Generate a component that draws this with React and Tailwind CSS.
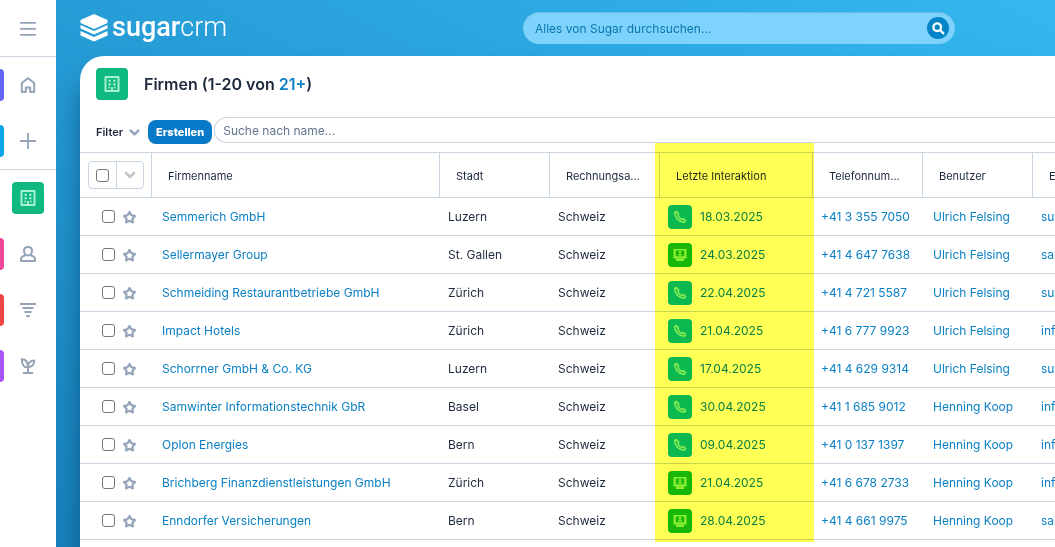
import { ChevronDown, Star } from "lucide-react";

const FIRMS = [
  { name: "Semmerich GmbH", city: "Luzern", country: "Schweiz", type: "call", date: "18.03.2025", phone: "+41 3 355 7050", user: "Ulrich Felsing", mail: "support@semmerich.ch" },
  { name: "Sellermayer Group", city: "St. Gallen", country: "Schweiz", type: "meeting", date: "24.03.2025", phone: "+41 4 647 7638", user: "Ulrich Felsing", mail: "sales@sellermayer.ch" },
  { name: "Schmeiding Restaurantbetriebe GmbH", city: "Zürich", country: "Schweiz", type: "call", date: "22.04.2025", phone: "+41 4 721 5587", user: "Ulrich Felsing", mail: "support@schmeiding.ch" },
  { name: "Impact Hotels", city: "Zürich", country: "Schweiz", type: "call", date: "21.04.2025", phone: "+41 6 777 9923", user: "Ulrich Felsing", mail: "info@impact.ch" },
  { name: "Schorrner GmbH & Co. KG", city: "Luzern", country: "Schweiz", type: "call", date: "17.04.2025", phone: "+41 4 629 9314", user: "Ulrich Felsing", mail: "support@schorrner.ch" },
  { name: "Samwinter Informationstechnik GbR", city: "Basel", country: "Schweiz", type: "call", date: "30.04.2025", phone: "+41 1 685 9012", user: "Henning Koop", mail: "info@samwinter.ch" },
  { name: "Oplon Energies", city: "Bern", country: "Schweiz", type: "call", date: "09.04.2025", phone: "+41 0 137 1397", user: "Henning Koop", mail: "info@oplon.ch" },
  { name: "Brichberg Finanzdienstleistungen GmbH", city: "Zürich", country: "Schweiz", type: "meeting", date: "21.04.2025", phone: "+41 6 678 2733", user: "Henning Koop", mail: "info@brichberg.ch" },
  { name: "Enndorfer Versicherungen", city: "Bern", country: "Schweiz", type: "meeting", date: "28.04.2025", phone: "+41 4 661 9975", user: "Henning Koop", mail: "sales@enndorfer.ch" },
];

const COLUMNS = ["Firmenname", "Stadt", "Rechnungsa...", "Letzte Interaktion", "Telefonnum...", "Benutzer", "E-Mail"];

function MenuIcon() {
  return (
    <svg viewBox="0 0 16 16" className="h-4 w-4" stroke="currentColor" strokeWidth="1.800" aria-hidden="true">
      <path d="M0 2.800h16M0 8.800h16M0 14.800h16" />
    </svg>
  );
}

function PlusIcon() {
  return (
    <svg viewBox="0 0 16 16" className="h-4 w-4" stroke="currentColor" strokeWidth="1.800" aria-hidden="true">
      <path d="M0 8h16M8 0v16" />
    </svg>
  );
}

function BuildingIcon() {
  return (
    <svg viewBox="0 0 16 16" className="h-4 w-4" fill="none" aria-hidden="true">
      <path d="M1.500 1h13v14h-13z" stroke="currentColor" strokeWidth="2" strokeLinejoin="round" />
      <path d="M4.500 3.800h2.400v2H4.500zM9.100 3.800h2.400v2H9.100zM4.500 7.300h2.400v2H4.500zM9.100 7.300h2.400v2H9.100zM4.500 10.600H6v1.800H4.500zM10 10.600h1.500v1.800H10zM7 11h2v4H7z" fill="currentColor" />
    </svg>
  );
}

function HomeIcon() {
  return (
    <svg viewBox="0 0 16 16" className="h-4 w-4" fill="none" stroke="currentColor" strokeWidth="2" strokeLinejoin="round" aria-hidden="true">
      <path d="M1.800 6 8 1.200 14.200 6v9h-4v-4.500H5.800V15h-4z" />
    </svg>
  );
}

function PersonIcon() {
  return (
    <svg viewBox="0 0 16 16" className="h-4 w-4" fill="none" stroke="currentColor" strokeWidth="2" strokeLinejoin="round" aria-hidden="true">
      <path d="M8 1c2.400 0 4 1.600 4 4s-1.600 4.400-4 4.400S4 7.400 4 5s1.600-4 4-4z" />
      <path d="M5.500 9 2.400 10.600C1.400 11 1 11.800 1 12.800V15h14v-2.200c0-1-.4-1.800-1.400-2.200L10.500 9" />
    </svg>
  );
}

function FunnelIcon() {
  return (
    <svg viewBox="0 0 16 16" className="h-4 w-4" stroke="currentColor" strokeWidth="2" aria-hidden="true">
      <path d="M0 2h16M2.500 6h11M4.500 10h7M6.200 14h3.600" />
    </svg>
  );
}

function PlantIcon() {
  return (
    <svg viewBox="0 0 16 16" className="h-4 w-4" fill="none" stroke="currentColor" strokeWidth="2" aria-hidden="true">
      <path d="M8 15V8M3 15h10M8 9.500C4 9.500 1.800 7 1.800 1.300 5.500 1.300 8 4 8 9.500zM8 9C8 5 10.500 2.500 14.200 2.500 14.200 7 12 9 8 9z" />
    </svg>
  );
}

function PhoneIcon() {
  return (
    <svg viewBox="0 0 14 14" className="h-3.5 w-3.5" fill="none" stroke="currentColor" strokeWidth="1.600" strokeLinejoin="round" aria-hidden="true">
      <path d="M3.500 1.500 1.700 2.600C1.700 7.700 6 12 11.200 12.200l1.300-1.800-2.500-1.800-1.400 1C7 8.800 5.600 7.300 4.900 5.500l.8-1.300z" />
    </svg>
  );
}

function MeetingIcon() {
  return (
    <svg viewBox="0 0 14 14" className="h-3.5 w-3.5" fill="currentColor" fillRule="evenodd" aria-hidden="true">
      <path d="M.5 1h13v9.500h-13zM2.800 2.600v5.600h8.400V2.600z" />
      <circle cx="7" cy="4.200" r="1.200" />
      <path d="M4.800 7.600c0-1.400 1-1.800 2.200-1.800s2.200.4 2.200 1.800zM3 10.500h8V13H3z" />
    </svg>
  );
}

const NAV = [
  { label: "Home", bar: "bg-[#6366f1]", icon: <HomeIcon /> },
  { label: "Neu", bar: "bg-[#0ea5e9]", icon: <PlusIcon /> },
  { label: "Firmen", active: true, icon: <BuildingIcon /> },
  { label: "Kontakte", bar: "bg-[#ec4899]", icon: <PersonIcon /> },
  { label: "Filter", bar: "bg-[#ef4444]", icon: <FunnelIcon /> },
  { label: "Interessenten", bar: "bg-[#a855f7]", icon: <PlantIcon /> },
];

function Sidebar() {
  return (
    <nav className="w-14 shrink-0 bg-white text-[#94a3b8]">
      <button aria-label="Menü" className="flex h-14 w-full items-center justify-center">
        <MenuIcon />
      </button>
      {NAV.map((item) => (
        <div
          key={item.label}
          className={`box-content flex h-14 items-center ${item.label === "Home" || item.active ? "border-t border-slate-300" : ""}`}
        >
          <span className={`h-8 w-1 rounded-r ${item.bar || ""}`} />
          <a
            href="#"
            aria-label={item.label}
            className={`ml-2 flex h-8 w-8 items-center justify-center rounded ${item.active ? "bg-[#10b981] text-[#a7f3d0]" : ""}`}
          >
            {item.icon}
          </a>
        </div>
      ))}
    </nav>
  );
}

function Header() {
  return (
    <header className="flex h-14 items-center">
      <a href="#" className="ml-6 flex w-[443px] items-center gap-1 text-white">
        <svg viewBox="0 0 28 28" className="h-7 w-7" fill="currentColor" aria-hidden="true">
          <path d="M14 0 27.500 6v3L14 15 .5 9V6z" />
          <path d="M.5 11 14 17l13.500-6v3.500L14 20.500.5 14.500z" />
          <path d="M.5 17 14 23l13.500-6v4.500L14 27.500.5 21.500z" />
        </svg>
        <span className="pb-0.5 font-[Roboto] text-[27px] leading-8">
          <span className="font-medium">sugar</span>
          <span className="font-light">crm</span>
        </span>
      </a>
      <form className="flex h-8 w-[432px] items-center rounded-full bg-[#7dd3fc] pr-1.5 pl-3 shadow-[inset_0_1px_1px_rgba(0,60,110,0.15)]">
        <input
          aria-label="Alles von Sugar durchsuchen"
          placeholder="Alles von Sugar durchsuchen..."
          className="h-8 min-w-0 flex-1 bg-transparent pt-px text-xs outline-none placeholder:text-[#0b76ae]"
        />
        <button type="button" aria-label="Suchen" className="flex h-[22px] w-[22px] items-center justify-center rounded-full bg-[#0284c7] text-white">
          <svg viewBox="0 0 14 14" className="h-3.5 w-3.5" fill="none" stroke="currentColor" strokeWidth="2.400" aria-hidden="true">
            <circle cx="6.200" cy="6.200" r="3.800" />
            <path d="m9 9 4 4" />
          </svg>
        </button>
      </form>
    </header>
  );
}

function CheckBox({ label }) {
  return (
    <input
      type="checkbox"
      aria-label={label}
      className="block h-[13px] w-[13px] appearance-none rounded-[3px] border border-[#767676] bg-white checked:bg-sky-600"
    />
  );
}

function FirmTable() {
  return (
    <table className="w-max table-fixed border-separate border-spacing-0 text-left">
      <colgroup>
        <col className="w-[72px]" />
        <col className="w-[288px]" />
        <col className="w-[110px]" />
        <col className="w-[110px]" />
        <col className="w-[153px]" />
        <col className="w-[110px]" />
        <col className="w-[110px]" />
        <col className="w-[110px]" />
      </colgroup>
      <thead>
        <tr className="h-[46px]">
          <th className="border-y border-r border-slate-300 p-0 pl-2">
            <div className="flex h-7 w-14 rounded border border-slate-300">
              <span className="flex w-7 items-center justify-center border-r border-slate-300">
                <CheckBox label="Alle auswählen" />
              </span>
              <button aria-label="Auswahl" className="flex flex-1 items-center justify-center text-[#c3c7cd]">
                <ChevronDown size={16} strokeWidth={4} />
              </button>
            </div>
          </th>
          {COLUMNS.map((c) => (
            <th key={c} className="border-y border-r border-slate-300 p-0 pt-0.5 pl-4 text-[11px] font-normal whitespace-nowrap">
              {c}
            </th>
          ))}
        </tr>
      </thead>
      <tbody className="text-xs whitespace-nowrap text-[#0b80c4] [&_td]:border-b [&_td]:border-slate-300">
        {FIRMS.map((f) => (
          <tr key={f.name} className="h-[38px]">
            <td className="p-0 pl-[22px]">
              <div className="flex items-center gap-2">
                <CheckBox label={f.name} />
                <button aria-label="Favorit" className="pt-px text-[#94a3b8]">
                  <Star size={13} strokeWidth={4} strokeLinejoin="miter" />
                </button>
              </div>
            </td>
            <td className="p-0 pl-2.5">
              <a href="#">{f.name}</a>
            </td>
            <td className="p-0 pl-2 text-slate-800">{f.city}</td>
            <td className="p-0 pl-2 text-slate-800">{f.country}</td>
            <td className="p-0 pl-2">
              <div className="flex items-center gap-2">
                <span
                  className={`flex h-6 w-6 items-center justify-center rounded ${f.type === "call" ? "bg-[#0cb8f0] text-[#8aeef8]" : "bg-[#18b820] text-[#8aef90]"}`}
                >
                  {f.type === "call" ? <PhoneIcon /> : <MeetingIcon />}
                </span>
                <a href="#">{f.date}</a>
              </div>
            </td>
            <td className="p-0 pl-2">
              <a href="#">{f.phone}</a>
            </td>
            <td className="p-0 pl-2.5">
              <a href="#">{f.user}</a>
            </td>
            <td className="p-0 pl-2">
              <a href="#">{f.mail}</a>
            </td>
          </tr>
        ))}
      </tbody>
    </table>
  );
}

export default function App() {
  return (
    <div className="flex h-screen overflow-hidden bg-linear-to-tr from-[#1680ba] to-[#35b7f0] font-[Inter,sans-serif] text-slate-800">
      <Sidebar />
      <div className="flex min-w-0 flex-1 flex-col overflow-hidden">
        <Header />
        <main className="ml-6 flex-1 overflow-hidden rounded-tl-3xl bg-white shadow-[0_24px_24px_rgba(0,50,90,0.5)]">
          <div className="flex h-14 items-center gap-4 pl-4">
            <span className="flex h-8 w-8 items-center justify-center rounded bg-[#10b981] text-[#a7f3d0]">
              <BuildingIcon />
            </span>
            <h1 className="text-base font-semibold">
              Firmen (1-20 von <a href="#" className="text-[#0b80c4]">21+</a>)
            </h1>
          </div>
          <div className="flex h-10 items-center pl-4">
            <button className="flex items-center gap-1 text-[11px] font-semibold">
              Filter <ChevronDown size={15} strokeWidth={4} className="text-[#94a3b8]" />
            </button>
            <button className="ml-1.5 h-6 rounded-lg bg-[#0679c8] px-2 text-[11px] font-extrabold text-white">Erstellen</button>
            <input
              aria-label="Suche nach name"
              placeholder="Suche nach name..."
              className="mb-1 ml-0.5 h-[26px] flex-1 rounded-l-full border border-r-0 border-slate-300 px-2 text-xs outline-none placeholder:text-slate-500"
            />
          </div>
          <div className="relative">
            <FirmTable />
            <div className="pointer-events-none absolute -top-[9px] left-[575px] h-[399px] w-[159px] bg-[#ffff55] mix-blend-multiply" />
          </div>
        </main>
      </div>
    </div>
  );
}
